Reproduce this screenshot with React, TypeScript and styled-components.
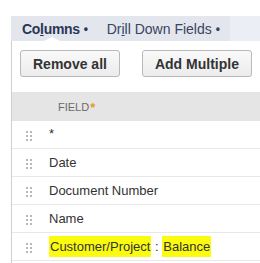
import React from 'react'
import styled, { createGlobalStyle } from 'styled-components'

const GlobalStyle = createGlobalStyle`
  html, body {
    margin: 0;
    padding: 0;
    background: #ffffff;
    font-family: "Liberation Sans", Arial, sans-serif;
  }
`

const Page = styled.div`
  width: 260px;
  height: 263px;
  overflow: hidden;
  padding: 16px 0 0 11px;
  box-sizing: border-box;
`

const TabBar = styled.div`
  display: flex;
  height: 25px;
  background: #ebeef4;
`

const TabList = styled.div`
  display: flex;
  background: #e3e6ed;
  padding-right: 2px;
`

const Tab = styled.div<{ $active?: boolean }>`
  position: relative;
  display: flex;
  align-items: center;
  padding: 0 8px 0 11px;
  font-size: 14px;
  font-weight: ${(p) => (p.$active ? 'bold' : 'normal')};
  color: ${(p) => (p.$active ? '#2a3756' : '#384462')};
  letter-spacing: ${(p) => (p.$active ? '-0.3px' : '0')};
  u {
    text-decoration: underline;
    text-underline-offset: 1px;
  }
  ${(p) =>
    p.$active &&
    `
    &::after {
      content: '';
      position: absolute;
      left: 33px;
      bottom: 0;
      border-left: 8px solid transparent;
      border-right: 8px solid transparent;
      border-bottom: 4px solid #ffffff;
    }
  `}
`

const Dot = styled.span`
  margin-left: 4px;
  font-size: 12px;
  font-weight: bold;
`

const Panel = styled.div`
  border-left: 1px solid #cfcfcf;
  height: 230px;
`

const ButtonRow = styled.div`
  display: flex;
  gap: 22px;
  padding: 9px 0 15px 8px;
`

const Button = styled.button`
  height: 27px;
  padding: 0 12px;
  border: 1px solid #b9b9b9;
  border-radius: 3px;
  background: linear-gradient(#f9f9f9, #ececec);
  font-family: "Liberation Sans", Arial, sans-serif;
  font-size: 14px;
  font-weight: bold;
  color: #333333;
  cursor: pointer;
`

const HeaderRow = styled.div`
  display: flex;
  align-items: center;
  height: 29px;
  background: #e5e5e5;
  padding-left: 46px;
  font-size: 11px;
  color: #6b6b6b;
  text-transform: uppercase;
`

const Required = styled.sup`
  color: #e0a020;
  font-size: 13px;
  font-weight: bold;
  margin-left: 1px;
  position: relative;
  top: 1px;
`

const Row = styled.div`
  display: flex;
  align-items: center;
  height: 27px;
  border-bottom: 1px solid #e8e8e8;
  font-size: 13px;
  color: #333333;
`

const Handle = styled.div`
  display: grid;
  grid-template-columns: repeat(2, 2px);
  grid-auto-rows: 2px;
  gap: 2px;
  margin: 2px 17px 0 14px;
  span {
    background: #b8b8b8;
  }
`

const Label = styled.span<{ $star?: boolean }>`
  ${(p) => p.$star && 'align-self: flex-start; margin-top: 5px;'}
`

const Mark = styled.span`
  background: #fbfb10;
  padding: 3px 1px;
`

const DragHandle = () => (
  <Handle>
    {Array.from({ length: 6 }).map((_, i) => (
      <span key={i} />
    ))}
  </Handle>
)

const fields = ['Date', 'Document Number', 'Name']

export default function App() {
  return (
    <Page>
      <GlobalStyle />
      <TabBar>
        <TabList>
          <Tab $active>
            Co<u>l</u>umns<Dot>•</Dot>
          </Tab>
          <Tab>
            Dr<u>i</u>ll Down Fields<Dot>•</Dot>
          </Tab>
        </TabList>
      </TabBar>
      <Panel>
        <ButtonRow>
          <Button>Remove all</Button>
          <Button>Add Multiple</Button>
        </ButtonRow>
        <HeaderRow>
          Field<Required>*</Required>
        </HeaderRow>
        <Row>
          <DragHandle />
          <Label $star>*</Label>
        </Row>
        {fields.map((f) => (
          <Row key={f}>
            <DragHandle />
            <Label>{f}</Label>
          </Row>
        ))}
        <Row>
          <DragHandle />
          <Label>
            <Mark>Customer/Project</Mark> : <Mark>Balance</Mark>
          </Label>
        </Row>
      </Panel>
    </Page>
  )
}
